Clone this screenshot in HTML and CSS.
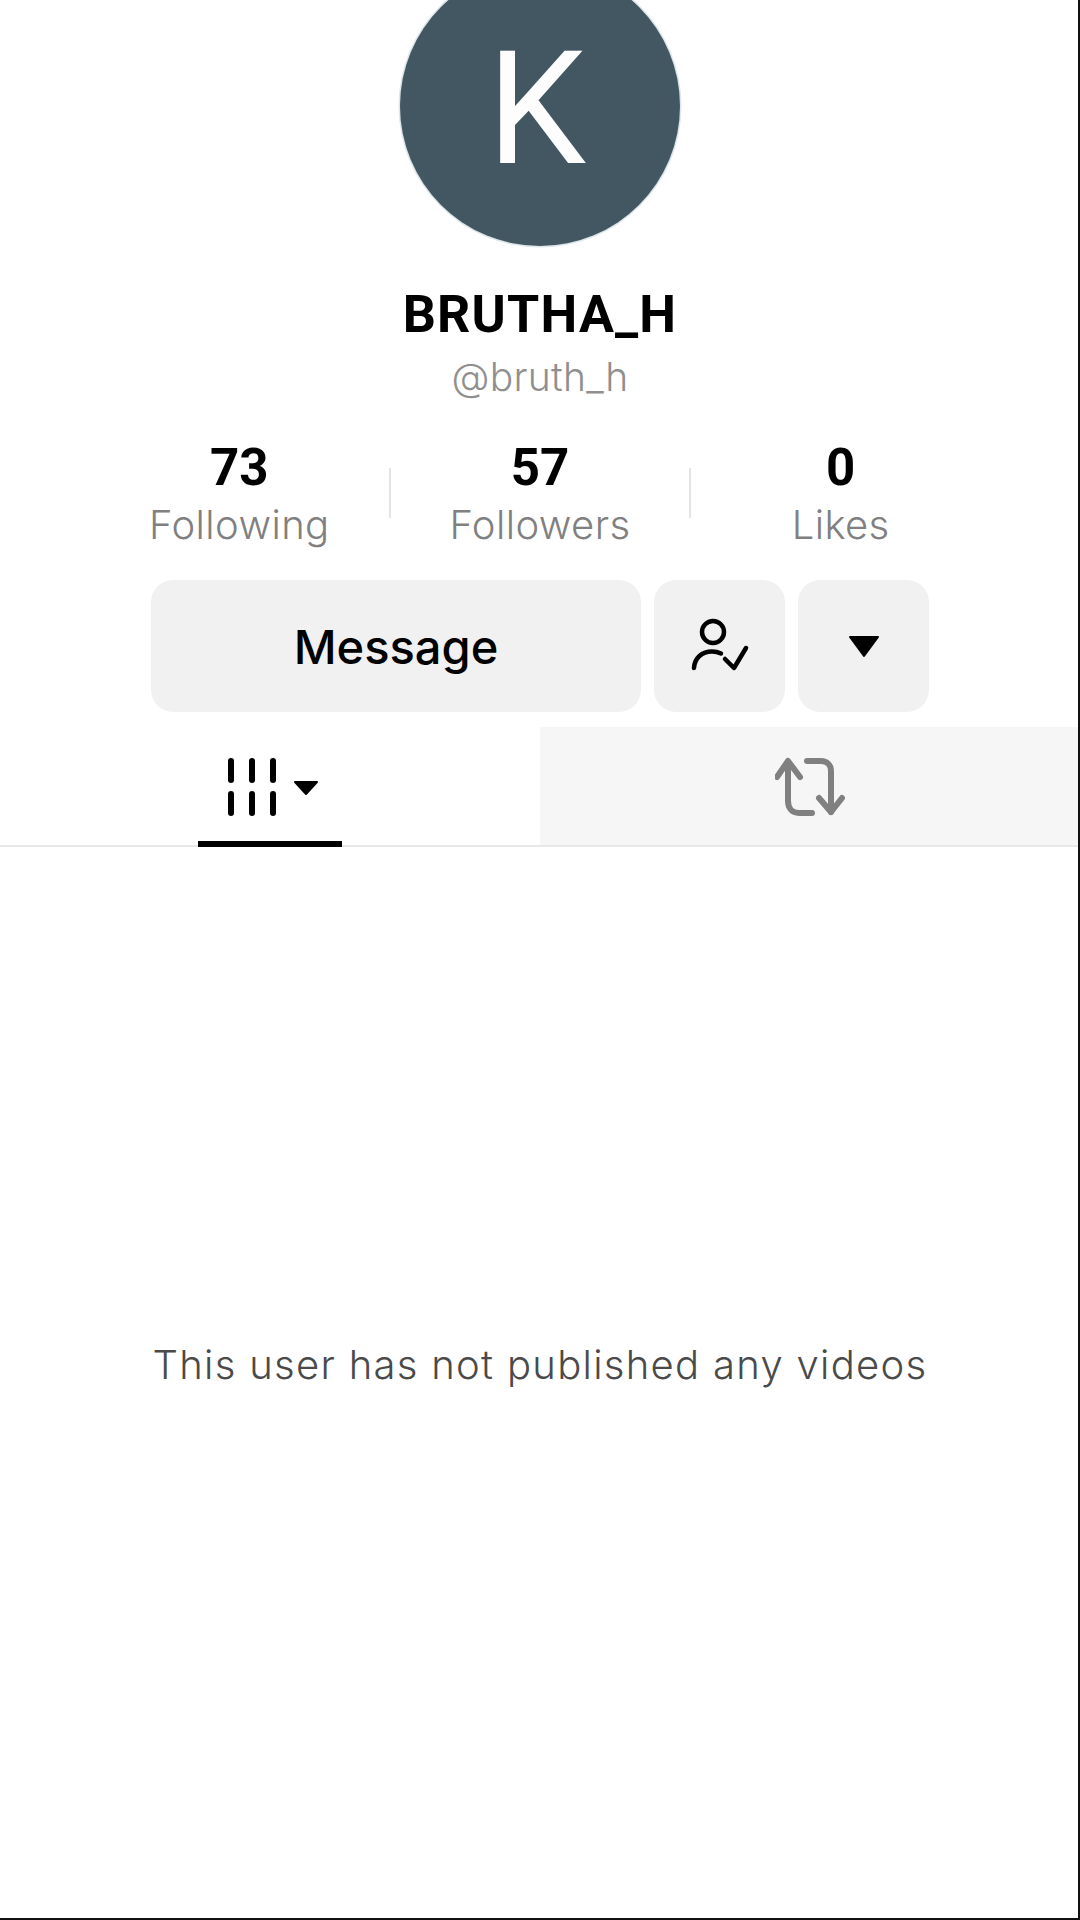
FILE: index.html
```html
<!DOCTYPE html>
<html lang="en">
<head>
<meta charset="utf-8">
<title>BRUTHA_H</title>
<link rel="stylesheet" href="styles.css">
</head>
<body>
<main class="profile">
  <div class="avatar">K</div>
  <h1 class="name">BRUTHA_H</h1>
  <p class="handle">@bruth_h</p>

  <section class="stats">
    <div class="stat"><strong>73</strong><span>Following</span></div>
    <i class="divider"></i>
    <div class="stat"><strong>57</strong><span>Followers</span></div>
    <i class="divider"></i>
    <div class="stat"><strong>0</strong><span>Likes</span></div>
  </section>

  <section class="actions">
    <button class="btn btn-wide">Message</button>
    <button class="btn btn-icon" aria-label="Following">
      <svg width="60" height="60" viewBox="0 0 60 60" fill="none" stroke="#000" stroke-width="4.500" stroke-linecap="round" stroke-linejoin="round">
        <circle cx="23" cy="16" r="11"/>
        <path d="M4 52C4.500 42 12 35.500 22 35.500C25 35.500 28 36 31 37.500"/>
        <path d="M35 43L44 52L56 32"/>
      </svg>
    </button>
    <button class="btn btn-icon" aria-label="More">
      <svg width="34" height="24" viewBox="0 0 34 24"><path d="M3 3H31L17 22Z" fill="#000" stroke="#000" stroke-width="2" stroke-linejoin="round"/></svg>
    </button>
  </section>

  <nav class="tabs">
    <div class="tab tab-active">
      <svg width="144" height="60" viewBox="0 0 144 60" fill="#000">
        <rect x="30" y="2" width="6" height="25" rx="3"/><rect x="51" y="2" width="6" height="25" rx="3"/><rect x="72" y="2" width="6" height="25" rx="3"/>
        <rect x="30" y="35" width="6" height="25" rx="3"/><rect x="51" y="35" width="6" height="25" rx="3"/><rect x="72" y="35" width="6" height="25" rx="3"/>
        <path d="M97 26H119L108 38Z" stroke="#000" stroke-width="2" stroke-linejoin="round"/>
      </svg>
    </div>
    <div class="tab tab-muted">
      <svg width="70" height="60" viewBox="0 0 70 60" fill="none" stroke="#808080" stroke-width="6" stroke-linecap="round" stroke-linejoin="round">
        <path d="M2 21L13 5L25 21"/>
        <path d="M13 6V45C13 52 17 57 24 57H37"/>
        <path d="M32 5H46C52 5 56 9 56 15V56"/>
        <path d="M44 42L56 56L67 42"/>
      </svg>
    </div>
  </nav>

  <p class="empty">This user has not published any videos</p>
</main>
</body>
</html>
```

FILE: styles.css
```css
* {
  box-sizing: border-box;
}

html,
body {
  margin: 0;
  height: 1920px;
  background: #fff;
  overflow: hidden;
}

/* Thin dark edge along the right and bottom of the viewport */
body::after {
  content: "";
  box-sizing: border-box;
  position: absolute;
  inset: 0;
  width: 1080px;
  height: 1920px;
  border-right: 2px solid #111;
  border-bottom: 2px solid #111;
  pointer-events: none;
}

.profile {
  width: 1080px;
  display: flex;
  flex-direction: column;
  align-items: center;
  font-family: "Inter", "Roboto", sans-serif;
  color: #000;
}

.avatar {
  width: 280px;
  height: 280px;
  margin-top: -34px;
  flex: none;
  border-radius: 50%;
  background: #435762;
  box-shadow: 0 0 0 1.500px #dde6ea;
  color: #fdfdfd;
  font-family: "Roboto", sans-serif;
  font-size: 157px;
  font-weight: 450;
  line-height: 287px;
  text-indent: -7px;
  text-align: center;
}

.name {
  margin: 39px 0 0;
  font-family: "Roboto", sans-serif;
  font-size: 52px;
  font-weight: 700;
  line-height: 60px;
  letter-spacing: 1.200px;
}

.handle {
  margin: 9px 0 0;
  font-family: "Inter", sans-serif;
  font-size: 39px;
  font-weight: 300;
  line-height: 46px;
  letter-spacing: 0.300px;
  color: #8f8f8f;
}

.stats {
  width: 900px;
  margin-top: 40px;
  display: flex;
  align-items: flex-start;
}

.stat {
  flex: 1;
  display: flex;
  flex-direction: column;
  align-items: center;
}

.stat strong {
  font-family: "Roboto", sans-serif;
  font-size: 51px;
  font-weight: 700;
  line-height: 56px;
}

.stat span {
  margin-top: 6px;
  font-family: "Inter", sans-serif;
  font-size: 40px;
  font-weight: 300;
  line-height: 46px;
  letter-spacing: 0.400px;
  color: #808080;
}

.divider {
  width: 2px;
  height: 50px;
  margin-top: 28px;
  background: #e4e4e4;
}

.actions {
  width: 778px;
  margin-top: 32px;
  display: flex;
  gap: 13px;
}

.btn {
  height: 132px;
  border: 0;
  padding: 0;
  border-radius: 22px;
  background: #f1f1f1;
  display: flex;
  align-items: center;
  justify-content: center;
  color: #000;
  font-family: "Inter", sans-serif;
  font-size: 47px;
  font-weight: 500;
}

.btn-wide {
  flex: 1;
}

.btn-icon {
  width: 131px;
  flex: none;
}

.tabs {
  width: 100%;
  height: 120px;
  margin-top: 15px;
  display: flex;
  border-bottom: 2px solid #e8e8e8;
}

.tab {
  width: 540px;
  display: flex;
  align-items: center;
  justify-content: center;
}

.tab-active {
  position: relative;
}

/* Black underline sitting on the tab bar rule */
.tab-active::after {
  content: "";
  position: absolute;
  left: 198px;
  bottom: -2px;
  width: 144px;
  height: 6px;
  background: #000;
}

.tab-muted {
  background: #f6f6f6;
}

.empty {
  margin: 494px 0 0;
  font-family: "Inter", sans-serif;
  font-size: 40px;
  font-weight: 300;
  line-height: 48px;
  letter-spacing: 1.300px;
  color: #4a4a4a;
}
```
